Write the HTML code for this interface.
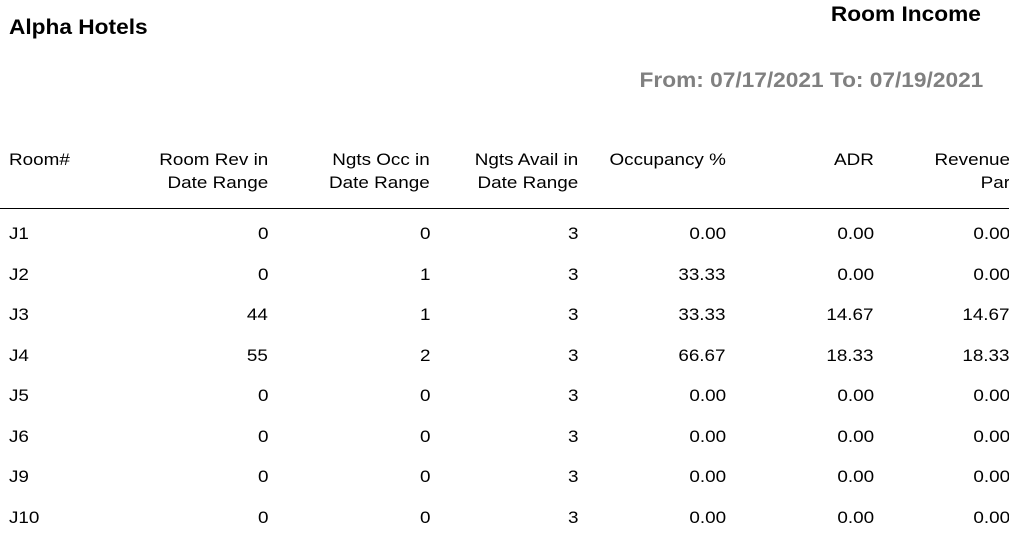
<!DOCTYPE html>
<html><head><style>
body{margin:0;width:1009px;height:538px;background:#fff;font-family:"Liberation Sans",Arial,sans-serif;color:#000;position:relative;overflow:hidden}
.a{position:absolute;white-space:nowrap}
.t{font-weight:bold;font-size:21px;transform:scaleX(1.08)}
.h{font-size:17px;line-height:23px;top:148px;transform:scaleX(1.11);transform-origin:right top}
.r{text-align:right}
.c{font-size:17px;position:absolute;text-align:right;white-space:nowrap;transform:scaleX(1.11);transform-origin:right top}
</style></head><body>
<div class="a t" style="left:9px;top:16px;transform-origin:left top">Alpha Hotels</div>
<div class="a t" style="right:28px;top:3px;transform-origin:right top">Room Income</div>
<div class="a t" style="right:26px;top:69px;color:#808080;transform-origin:right top">From: 07/17/2021 To: 07/19/2021</div>
<div class="a h" style="left:9px;transform-origin:left top">Room#</div>
<div class="a h r" style="right:741px">Room Rev in<br>Date Range</div>
<div class="a h r" style="right:579px">Ngts Occ in<br>Date Range</div>
<div class="a h r" style="right:431px">Ngts Avail in<br>Date Range</div>
<div class="a h r" style="right:283px">Occupancy %</div>
<div class="a h r" style="right:135px">ADR</div>
<div class="a h r" style="right:-1px">Revenue<br>Par</div>
<div class="a" style="left:0;top:208px;width:1009px;height:1px;background:#000"></div>
<div id="rows"></div>
<script>
var d=[["J1",0,0,3,"0.00","0.00","0.00"],["J2",0,1,3,"33.33","0.00","0.00"],["J3",44,1,3,"33.33","14.67","14.67"],["J4",55,2,3,"66.67","18.33","18.33"],["J5",0,0,3,"0.00","0.00","0.00"],["J6",0,0,3,"0.00","0.00","0.00"],["J9",0,0,3,"0.00","0.00","0.00"],["J10",0,0,3,"0.00","0.00","0.00"]];
var R=[741,579,431,283,135,-1],h="";
d.forEach(function(r,i){var y=224+i*40.5;
h+='<div class="c" style="left:9px;text-align:left;transform-origin:left top;top:'+y+'px">'+r[0]+'</div>';
for(var j=1;j<7;j++)h+='<div class="c" style="right:'+R[j-1]+'px;top:'+y+'px">'+r[j]+'</div>';});
document.getElementById("rows").innerHTML=h;
</script>
</body></html>
